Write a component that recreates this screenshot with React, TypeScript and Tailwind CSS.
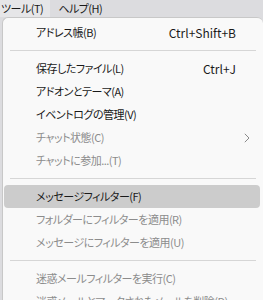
import { Fragment } from "react";

type Item =
  | { sep: true }
  | { sep?: false; label: string; shortcut?: string; disabled?: boolean; sub?: boolean; active?: boolean };

const items: Item[] = [
  { label: "アドレス帳(B)", shortcut: "Ctrl+Shift+B" },
  { sep: true },
  { label: "保存したファイル(L)", shortcut: "Ctrl+J" },
  { label: "アドオンとテーマ(A)" },
  { label: "イベントログの管理(V)" },
  { label: "チャット状態(C)", disabled: true, sub: true },
  { label: "チャットに参加...(T)", disabled: true },
  { sep: true },
  { label: "メッセージフィルター(F)", active: true },
  { label: "フォルダーにフィルターを適用(R)", disabled: true },
  { label: "メッセージにフィルターを適用(U)", disabled: true },
  { sep: true },
  { label: "迷惑メールフィルターを実行(C)", disabled: true },
  { label: "迷惑メールとマークされたメールを削除(D)", disabled: true },
];

function Chevron() {
  return (
    <svg width="6" height="10" viewBox="0 0 6 10" className="text-[#8a8a8a]">
      <path d="M0.8 0.8 L5 5 L0.8 9.2" fill="none" stroke="currentColor" strokeWidth="1" />
    </svg>
  );
}

export default function App() {
  return (
    <div
      className="h-[300px] w-[263px] overflow-hidden bg-[#dcdcdf] text-[12px] [font-feature-settings:'palt']"
      style={{ fontFamily: '"Noto Sans CJK JP", "Noto Sans", sans-serif' }}
    >
      {/* menubar */}
      <div className="flex h-[17px] items-center text-[11px] leading-none tracking-[-0.5px] text-[#1a1a1a]">
        <span className="flex h-full items-center bg-[#e6e6e8] pl-[1px] pr-[7px]">ツール(T)</span>
        <span className="ml-[8px]">ヘルプ(H)</span>
      </div>

      {/* dropdown */}
      <div className="ml-[2px] w-[261px] rounded-t-[6px] border-l border-t border-[#c8c8c8] bg-[#f9f9f9] pt-[3px]">
        {items.map((it, i) =>
          it.sep ? (
            <div key={i} className="h-[13px] pt-[6px]">
              <div className="ml-[7px] mr-[7px] h-px bg-[#d6d6d6]" />
            </div>
          ) : (
            <Fragment key={i}>
              <div
                className={`ml-[1px] mr-[3px] flex h-[23px] items-center rounded-[4px] pl-[32px] whitespace-nowrap ${
                  it.active ? "bg-[#cccccc]" : ""
                } ${it.disabled ? "text-[#8c8c8c]" : "text-[#1a1a1a]"}`}
              >
                <span className="flex-1 text-[11px] tracking-[-0.5px]">{it.label}</span>
                {it.shortcut && <span className="mr-[24px]">{it.shortcut}</span>}
                {it.sub && (
                  <span className="mr-[10px] flex items-center">
                    <Chevron />
                  </span>
                )}
              </div>
            </Fragment>
          )
        )}
      </div>
    </div>
  );
}
